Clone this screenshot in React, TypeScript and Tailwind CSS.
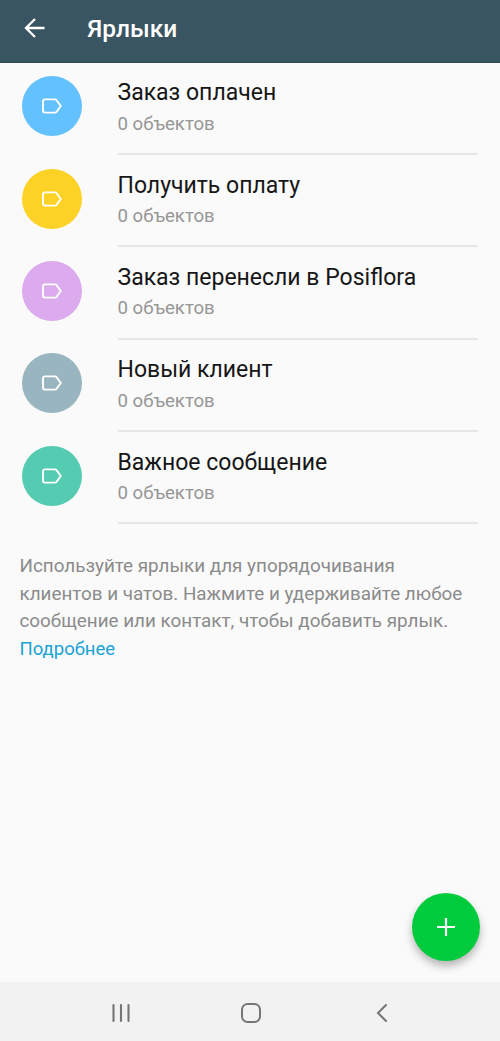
import clsx from "clsx"

type Label = {
  title: string
  color: string
}

const labels: Label[] = [
  { title: "Заказ оплачен", color: "bg-[#63c1fe]" },
  { title: "Получить оплату", color: "bg-[#fdd226]" },
  { title: "Заказ перенесли в Posiflora", color: "bg-[#dcabee]" },
  { title: "Новый клиент", color: "bg-[#98b5c0]" },
  { title: "Важное сообщение", color: "bg-[#55cbb1]" },
]

const LabelIcon = () => (
  <svg width="22" height="16" viewBox="0 0 22 16" fill="none" stroke="white" strokeWidth="1.9" strokeLinejoin="round">
    <path d="M4 1.4h10c.7 0 1.1.2 1.5.7L19.8 8l-4.3 5.9c-.4.5-.8.7-1.5.7H4c-1.2 0-2-.8-2-2V3.4c0-1.2.8-2 2-2z" />
  </svg>
)

const Header = () => (
  <header className="flex h-[62.5px] shrink-0 items-center border-b border-[#2f4a57] bg-[#3a5562] pb-[5px] pl-6 text-white">
    <button aria-label="Назад">
      <svg width="21" height="20" viewBox="0 0 21 20" fill="none" stroke="currentColor" strokeWidth="2.3">
        <path d="M20.5 10H2M11 1l-9 9 9 9" />
      </svg>
    </button>
    <h1 className="ml-[42.3px] pt-[2px] text-[24.5px] leading-7 font-medium">Ярлыки</h1>
  </header>
)

const LabelRow = ({ title, color }: Label) => (
  <li className="flex h-[92.4px] pr-[22px] pl-[22px]">
    <div className={clsx("mt-[13.8px] flex size-[60px] shrink-0 items-center justify-center rounded-full", color)}>
      <LabelIcon />
    </div>
    <div className="ml-[35.5px] flex-1 border-b-2 border-[#e7e7e7] pt-[15.7px]">
      <div className="text-[23px] leading-[30px] text-[#161616]">{title}</div>
      <div className="mt-[1.5px] text-[18.6px] leading-[28px] text-[#969696]">0 объектов</div>
    </div>
  </li>
)

const NavBar = () => (
  <nav className="flex h-[59px] shrink-0 items-center bg-[#f2f2f2] pt-[2px] pl-[111px] text-[#767676]">
    <svg width="20" height="20" viewBox="0 0 20 20" stroke="currentColor" strokeWidth="2.1" strokeLinecap="round">
      <path d="M2.5 2v16M10 2v16M17.5 2v16" />
    </svg>
    <svg className="ml-[109px]" width="22" height="22" viewBox="0 0 22 22" fill="none" stroke="currentColor" strokeWidth="2">
      <rect x="2" y="2" width="18" height="18" rx="5.5" />
    </svg>
    <svg className="ml-[113.5px]" width="12" height="20" viewBox="0 0 12 20" fill="none" stroke="currentColor" strokeWidth="2.1" strokeLinecap="round">
      <path d="M10 2L2 10l8 8" />
    </svg>
  </nav>
)

const App = () => {
  return (
    <div className="relative flex h-[1041px] w-[500px] flex-col bg-[#fafafa] font-['Roboto',sans-serif]">
      <Header />
      <main className="flex-1">
        <ul>
          {labels.map((label) => (
            <LabelRow key={label.title} {...label} />
          ))}
        </ul>
        <p className="mt-[28.3px] pl-[19.5px] text-[18.85px] leading-[27.8px] whitespace-nowrap text-[#8b8b8b]">
          Используйте ярлыки для упорядочивания
          <br />
          клиентов и чатов. Нажмите и удерживайте любое
          <br />
          сообщение или контакт, чтобы добавить ярлык.
          <br />
          <a className="text-[18.5px] text-[#1aa3d6]" href="#">Подробнее</a>
        </p>
      </main>
      <button
        aria-label="Добавить"
        className="absolute right-[20px] bottom-[80px] flex size-[68px] items-center justify-center rounded-full bg-[#00cb3c] shadow-[0_5px_9px_rgba(0,0,0,0.28)]"
      >
        <svg width="18" height="18" viewBox="0 0 18 18" stroke="white" strokeWidth="2.2">
          <path d="M9 0v18M0 9h18" />
        </svg>
      </button>
      <NavBar />
    </div>
  )
}

export default App
